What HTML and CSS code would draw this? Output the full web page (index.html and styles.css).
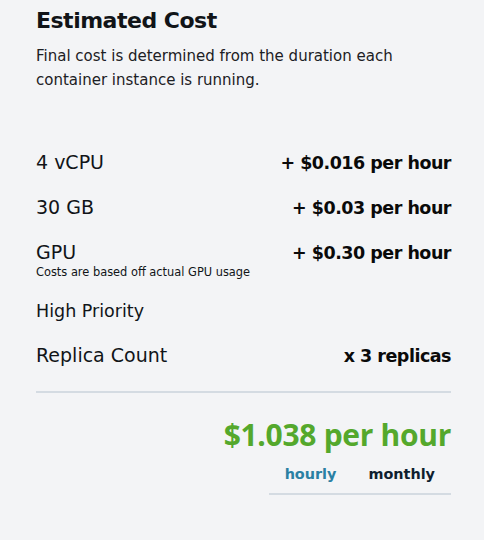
FILE: index.html
```html
<!DOCTYPE html>
<html>
<head>
<meta charset="utf-8">
<link rel="stylesheet" href="styles.css">
</head>
<body>
<div class="panel">
  <h1 class="title">Estimated Cost</h1>
  <p class="desc">Final cost is determined from the duration each container instance is running.</p>
  <div class="rows">
    <div class="row"><span class="label">4 vCPU</span><span class="value">+ $0.016 per hour</span></div>
    <div class="row"><span class="label">30 GB</span><span class="value">+ $0.03 per hour</span></div>
    <div class="row row-gpu">
      <div class="gpu">
        <span class="label">GPU</span>
        <span class="note">Costs are based off actual GPU usage</span>
      </div>
      <span class="value">+ $0.30 per hour</span>
    </div>
    <div class="row row-hp"><span class="label label-small">High Priority</span></div>
    <div class="row row-last"><span class="label">Replica Count</span><span class="value">x 3 replicas</span></div>
  </div>
  <div class="divider"></div>
  <div class="total">$1.038 per hour</div>
  <div class="tabs">
    <div class="tab tab-active">hourly</div>
    <div class="tab">monthly</div>
  </div>
</div>
</body>
</html>
```

FILE: styles.css
```css
html, body {
  margin: 0;
  padding: 0;
  background: #f3f4f6;
}
body {
  font-family: "DejaVu Sans", "Noto Sans", sans-serif;
  color: #111418;
}
.panel {
  width: 415px;
  padding: 6px 0 0 36px;
}
.title {
  margin: 0;
  font-size: 22px;
  font-weight: 700;
  line-height: 30px;
  letter-spacing: -0.5px;
}
.desc {
  margin: 8px 0 0;
  font-size: 15px;
  line-height: 24px;
  color: #1c2024;
}
.rows {
  margin-top: 58px;
  display: flex;
  flex-direction: column;
}
.row {
  display: flex;
  justify-content: space-between;
  align-items: baseline;
  height: 45px;
}
.row-gpu {
  height: 59px;
}
.row-hp {
  height: 44px;
}
.row-last {
  height: 24px;
}
.gpu {
  display: flex;
  flex-direction: column;
}
.label {
  font-size: 19px;
  line-height: 24px;
}
.label-small {
  font-size: 17.5px;
}
.value {
  font-size: 17.5px;
  font-weight: 700;
  line-height: 24px;
  letter-spacing: -0.5px;
  color: #0a0a0a;
}
.note {
  font-size: 11.4px;
  line-height: 16px;
}
.divider {
  height: 2px;
  background: #d4dbe2;
  margin-top: 24px;
}
.total {
  margin-top: 24px;
  text-align: right;
  font-family: "Open Sans", "DejaVu Sans", sans-serif;
  font-size: 30px;
  font-weight: 700;
  line-height: 36px;
  letter-spacing: -0.3px;
  color: #54a82c;
}
.tabs {
  display: flex;
  justify-content: flex-end;
  margin-top: 11px;
}
.tab {
  padding: 0 16px 9px;
  font-size: 14.4px;
  font-weight: 700;
  line-height: 20px;
  color: #0f1e2e;
  border-bottom: 2px solid #d4dbe2;
}
.tab-active {
  color: #2a80a3;
}
```
